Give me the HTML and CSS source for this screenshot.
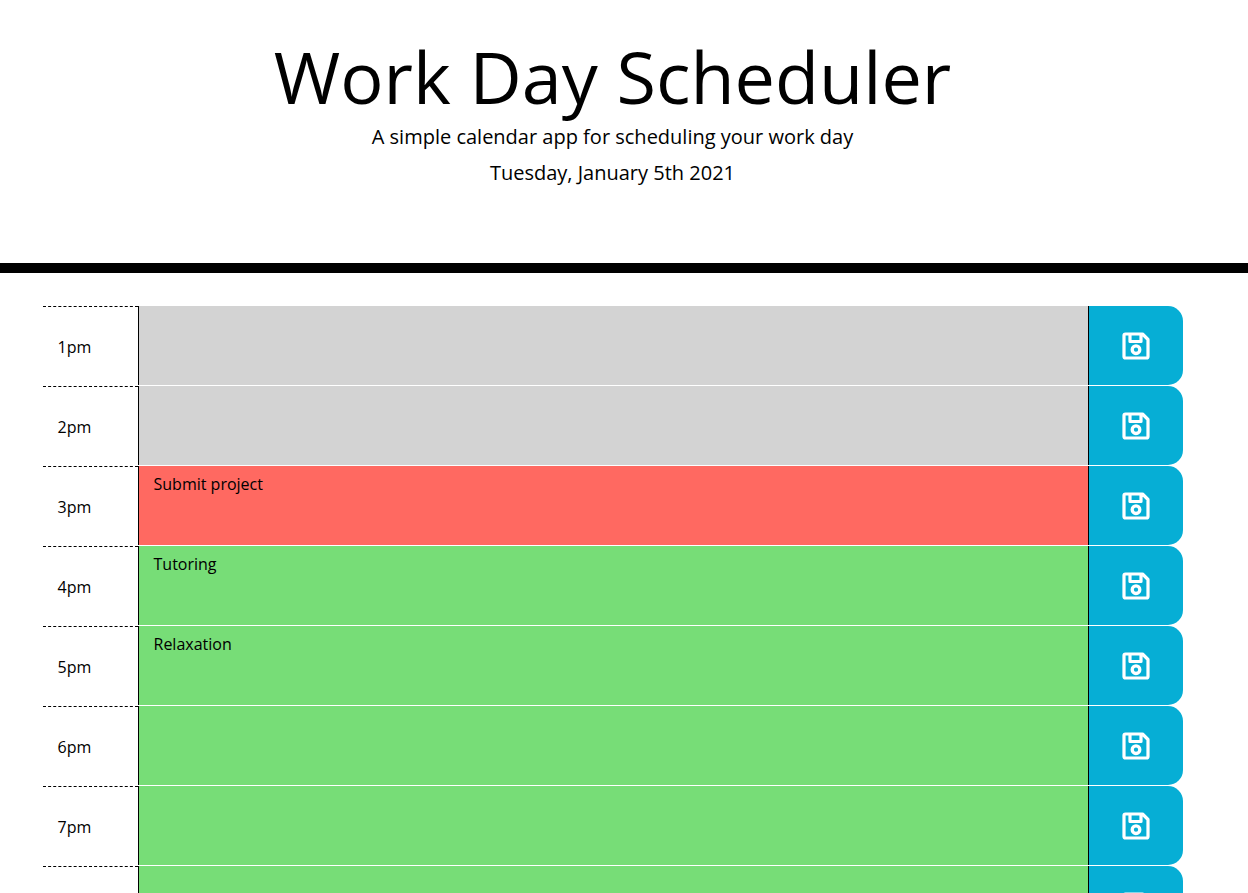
FILE: index.html
```html
<!DOCTYPE html>
<html lang="en">
<head>
<meta charset="utf-8">
<title>Work Day Scheduler</title>
<link rel="stylesheet" href="styles.css">
</head>
<body>
<svg class="sprite" aria-hidden="true">
  <symbol id="save" viewBox="0 0 28 28">
    <path fill="none" stroke="#fff" stroke-width="3.200" stroke-linejoin="round" d="M3.500 2H20.500l5.500 5.500v17q0 1.500-1.500 1.500h-21Q2 26 2 24.500v-21Q2 2 3.500 2zM8 2v7.500h11V2"/>
    <circle cx="14" cy="17.700" r="3.800" fill="none" stroke="#fff" stroke-width="3.300"/>
  </symbol>
</svg>
<header class="hero">
  <h1 class="title">Work Day Scheduler</h1>
  <p class="lead">A simple calendar app for scheduling your work day</p>
  <p class="lead">Tuesday, January 5th 2021</p>
</header>
<main class="page">
  <div class="schedule">
    <div class="row"><label class="hour" for="h1">1pm</label><textarea class="note past" id="h1"></textarea><button class="save" aria-label="Save 1pm"><svg class="icon"><use href="#save"/></svg></button></div>
    <div class="row"><label class="hour" for="h2">2pm</label><textarea class="note past" id="h2"></textarea><button class="save" aria-label="Save 2pm"><svg class="icon"><use href="#save"/></svg></button></div>
    <div class="row"><label class="hour" for="h3">3pm</label><textarea class="note present" id="h3">Submit project</textarea><button class="save" aria-label="Save 3pm"><svg class="icon"><use href="#save"/></svg></button></div>
    <div class="row"><label class="hour" for="h4">4pm</label><textarea class="note future" id="h4">Tutoring</textarea><button class="save" aria-label="Save 4pm"><svg class="icon"><use href="#save"/></svg></button></div>
    <div class="row"><label class="hour" for="h5">5pm</label><textarea class="note future" id="h5">Relaxation</textarea><button class="save" aria-label="Save 5pm"><svg class="icon"><use href="#save"/></svg></button></div>
    <div class="row"><label class="hour" for="h6">6pm</label><textarea class="note future" id="h6"></textarea><button class="save" aria-label="Save 6pm"><svg class="icon"><use href="#save"/></svg></button></div>
    <div class="row"><label class="hour" for="h7">7pm</label><textarea class="note future" id="h7"></textarea><button class="save" aria-label="Save 7pm"><svg class="icon"><use href="#save"/></svg></button></div>
    <div class="row"><label class="hour" for="h8">8pm</label><textarea class="note future" id="h8"></textarea><button class="save" aria-label="Save 8pm"><svg class="icon"><use href="#save"/></svg></button></div>
  </div>
</main>
</body>
</html>
```
FILE: styles.css
```css
* { box-sizing: border-box; }
html { scrollbar-width: none; }
body {
  margin: 0;
  background: #fff;
  color: #000;
  font-family: "Open Sans", sans-serif;
  font-size: 16px;
  line-height: 24px;
}
.sprite { display: none; }
.hero {
  padding: 33px 47px 69px 24px;
  border-bottom: 10px solid #000;
  text-align: center;
}
.title {
  margin: 0 0 3px;
  font-size: 72px;
  font-weight: 400;
  line-height: 86px;
}
.lead {
  margin: 0 0 6px;
  font-size: 20px;
  line-height: 30px;
}
.page { padding: 32px 23px 0 0; }
.schedule {
  max-width: 1140px;
  margin: 0 auto;
}
.row {
  display: grid;
  grid-template-columns: 1fr 10fr 1fr;
  height: 80px;
  border-top: 1px solid #fff;
}
.hour {
  padding: 28px 15px 0;
  border-top: 1px dashed #000;
}
.note {
  display: block;
  width: 100%;
  height: 100%;
  margin: 0;
  padding: 6px 15px;
  border: 0;
  border-left: 1px solid #000;
  border-radius: 0;
  outline: 0;
  resize: none;
  overflow: hidden;
  color: #000;
  font: inherit;
}
.past { background: #d3d3d3; }
.present { background: #ff6961; }
.future { background: #77dd77; }
.save {
  display: flex;
  align-items: center;
  justify-content: center;
  padding: 0;
  border: 0;
  border-left: 1px solid #000;
  border-radius: 0 15px 15px 0;
  background: #06aed5;
  cursor: pointer;
}
.icon {
  width: 28px;
  height: 28px;
}
```
